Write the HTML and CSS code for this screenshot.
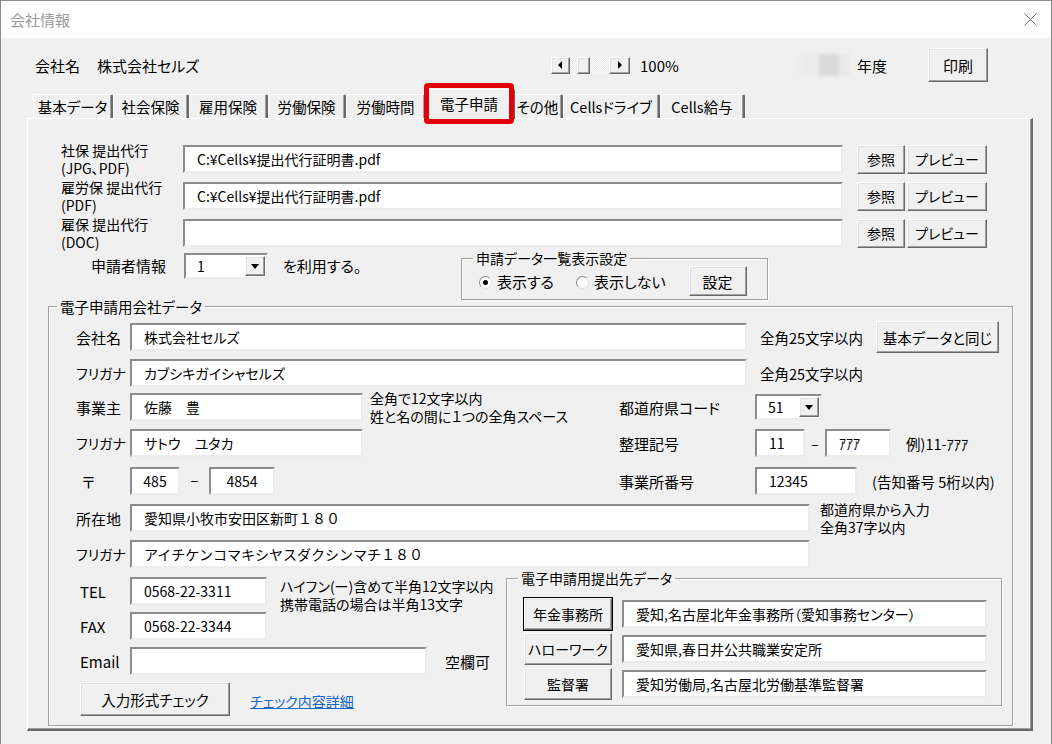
FILE: index.html
```html
<!DOCTYPE html>
<html lang="ja">
<head>
    <meta charset="UTF-8">
    <title>会社情報</title>
    <link rel="stylesheet" href="styles.css">
</head>
<body>
<div class="window">
    <div class="titlebar">
        <span class="title">会社情報</span>
        <svg class="close" width="13" height="13" viewBox="0 0 13 13"><path d="M0.5 0.5L12.5 12.5M12.5 0.5L0.5 12.5"/></svg>
    </div>

    <div class="topbar">
        <div class="company"><span>会社名</span><span>株式会社セルズ</span></div>
        <div class="zoomctl">
            <span class="btn sb-btn"><i class="tri-left"></i></span>
            <span class="sb-track"><span class="btn sb-thumb"></span></span>
            <span class="btn sb-btn sb-right"><i class="tri-right"></i></span>
            <span class="zoom-val">100%</span>
        </div>
        <div class="year"><span class="year-blur"></span><span>年度</span></div>
        <button class="btn btn-print">印刷</button>
    </div>

    <div class="tabs">
        <div class="tab" style="width:80px">基本データ</div>
        <div class="tab" style="width:76px">社会保険</div>
        <div class="tab" style="width:79px">雇用保険</div>
        <div class="tab" style="width:78px">労働保険</div>
        <div class="tab" style="width:80px">労働時間</div>
        <div class="tab active" style="width:91px">電子申請</div>
        <div class="tab" style="width:50px">その他</div>
        <div class="tab" style="width:97px">Cellsドライブ</div>
        <div class="tab" style="width:85px">Cells給与</div>
    </div>

    <div class="page">
        <div class="files">
            <div class="file-row">
                <div class="file-label">社保 提出代行<br>(JPG、PDF)</div>
                <input class="field file-field" type="text" value="C:¥Cells¥提出代行証明書.pdf">
                <button class="btn btn-ref">参照</button>
                <button class="btn btn-prev">プレビュー</button>
            </div>
            <div class="file-row">
                <div class="file-label">雇労保 提出代行<br>(PDF)</div>
                <input class="field file-field" type="text" value="C:¥Cells¥提出代行証明書.pdf">
                <button class="btn btn-ref">参照</button>
                <button class="btn btn-prev">プレビュー</button>
            </div>
            <div class="file-row">
                <div class="file-label">雇保 提出代行<br>(DOC)</div>
                <input class="field file-field" type="text" value="">
                <button class="btn btn-ref">参照</button>
                <button class="btn btn-prev">プレビュー</button>
            </div>
        </div>

        <div class="applicant">
            <div class="applicant-label">申請者情報</div>
            <div class="combo combo-applicant"><span class="combo-val">1</span><span class="btn combo-arrow"><i class="tri-down"></i></span></div>
            <div class="use-text">を利用する。</div>
            <fieldset class="group list-setting">
                <legend>申請データ一覧表示設定</legend>
                <div class="ls-body">
                    <span class="radio checked"></span><span class="radio-text">表示する</span>
                    <span class="radio second"></span><span class="radio-text">表示しない</span>
                    <button class="btn btn-set">設定</button>
                </div>
            </fieldset>
        </div>

        <fieldset class="group company-data">
            <legend>電子申請用会社データ</legend>
            <div class="cd-body">
                <div class="row">
                    <div class="row-label">会社名</div>
                    <input class="field w-617" type="text" value="株式会社セルズ">
                    <div class="note note-limit">全角25文字以内</div>
                    <button class="btn btn-same">基本データと同じ</button>
                </div>
                <div class="row">
                    <div class="row-label kana">フリガナ</div>
                    <input class="field w-617" type="text" value="カブシキガイシャセルズ">
                    <div class="note note-limit">全角25文字以内</div>
                </div>

                <div class="row row-owner">
                    <div class="row-left">
                        <div class="row-label">事業主</div>
                        <input class="field w-233" type="text" value="佐藤　豊">
                        <div class="note note-small">全角で12文字以内<br>姓と名の間に１つの全角スペース</div>
                    </div>
                    <div class="right-label">都道府県コード</div>
                    <div class="combo combo-pref"><span class="combo-val">51</span><span class="btn combo-arrow"><i class="tri-down"></i></span></div>
                </div>
                <div class="row">
                    <div class="row-left">
                        <div class="row-label kana">フリガナ</div>
                        <input class="field w-233" type="text" value="サトウ　ユタカ">
                    </div>
                    <div class="right-label">整理記号</div>
                    <input class="field w-50" type="text" value="11">
                    <div class="dash dash-code">–</div>
                    <input class="field w-66" type="text" value="ｱｱｱ">
                    <div class="note note-after">例)11-ｱｱｱ</div>
                </div>
                <div class="row row-zip">
                    <div class="row-left">
                        <div class="row-label label-zip">〒</div>
                        <input class="field w-50 centered" type="text" value="485">
                        <div class="dash dash-zip">−</div>
                        <input class="field w-66 centered" type="text" value="4854">
                    </div>
                    <div class="right-label">事業所番号</div>
                    <input class="field w-102" type="text" value="12345">
                    <div class="note note-after">(告知番号 5桁以内)</div>
                </div>

                <div class="row row-addr">
                    <div class="row-label">所在地</div>
                    <input class="field w-680 wide-digits" type="text" value="愛知県小牧市安田区新町１８０">
                    <div class="note note-small note-addr">都道府県から入力<br>全角37字以内</div>
                </div>
                <div class="row">
                    <div class="row-label kana">フリガナ</div>
                    <input class="field w-680 wide-digits" type="text" value="アイチケンコマキシヤスダクシンマチ１８０">
                </div>

                <div class="bottom">
                    <div class="contact">
                        <div class="crow">
                            <div class="row-label label-latin">TEL</div>
                            <input class="field w-137" type="text" value="0568-22-3311">
                            <div class="note note-small note-tel">ハイフン(ー)含めて半角12文字以内<br>携帯電話の場合は半角13文字</div>
                        </div>
                        <div class="crow">
                            <div class="row-label label-latin">FAX</div>
                            <input class="field w-137" type="text" value="0568-22-3344">
                        </div>
                        <div class="crow">
                            <div class="row-label label-latin">Email</div>
                            <input class="field w-297" type="text" value="">
                            <div class="note note-blank">空欄可</div>
                        </div>
                        <div class="crow check-row">
                            <button class="btn btn-check">入力形式チェック</button>
                            <a class="link" href="#">チェック内容詳細</a>
                        </div>
                    </div>

                    <fieldset class="group dest">
                        <legend>電子申請用提出先データ</legend>
                        <div class="dest-body">
                            <div class="drow">
                                <button class="btn btn-dest default">年金事務所</button>
                                <input class="field w-365" type="text" value="愛知,名古屋北年金事務所（愛知事務センター）">
                            </div>
                            <div class="drow">
                                <button class="btn btn-dest">ハローワーク</button>
                                <input class="field w-365" type="text" value="愛知県,春日井公共職業安定所">
                            </div>
                            <div class="drow">
                                <button class="btn btn-dest">監督署</button>
                                <input class="field w-365" type="text" value="愛知労働局,名古屋北労働基準監督署">
                            </div>
                        </div>
                    </fieldset>
                </div>
            </div>
        </fieldset>
    </div>
</div>
</body>
</html>
```

FILE: styles.css
```css
* {
    box-sizing: border-box;
}

body {
    margin: 0;
    background: #f0f0f0;
    font-family: "Noto Sans CJK JP", "Noto Sans", sans-serif;
    font-size: 14px;
    line-height: 17px;
    color: #000;
    font-feature-settings: "palt";
}

.window {
    width: 1052px;
    height: 744px;
    border: 1px solid #8a8a8a;
    border-bottom: none;
    background: #f0f0f0;
    overflow: hidden;
}

/* title bar */
.titlebar {
    height: 37px;
    background: #fff;
    display: flex;
    align-items: center;
    justify-content: space-between;
    padding: 0 14px 0 9px;
}

.title {
    color: #9a9a9a;
    font-size: 15px;
}

.close path {
    stroke: #777;
    stroke-width: 1;
    fill: none;
}

/* classic raised button */
.btn {
    font: inherit;
    color: #000;
    background: #f0f0f0;
    border: 1px solid;
    border-color: #fff #696969 #696969 #fff;
    box-shadow: inset -1px -1px 0 #a0a0a0, inset 1px 1px 0 #e3e3e3;
    padding: 0;
    border-radius: 0;
}

/* classic sunken text box */
.field {
    font: inherit;
    font-size: 14px;
    color: #000;
    height: 28px;
    background: #fff;
    border: 2px solid;
    border-color: #8c8c8c #ececec #ececec #8c8c8c;
    padding: 0 0 0 12px;
    outline: none;
    flex-shrink: 0;
}

.field.centered {
    padding: 0;
    text-align: center;
}

.field.wide-digits {
    font-feature-settings: normal;
}

/* header */
.topbar {
    display: flex;
    align-items: center;
    height: 34px;
    margin-top: 10px;
    padding-left: 34px;
    font-size: 15px;
}

.company {
    width: 516px;
    display: flex;
    gap: 17px;
}

.zoomctl {
    width: 249px;
    display: flex;
    align-items: center;
}

.sb-btn {
    width: 19px;
    height: 17px;
    display: flex;
    align-items: center;
    justify-content: center;
}

.sb-right {
    width: 21px;
}

.sb-track {
    width: 39px;
    height: 17px;
    background: repeating-conic-gradient(#fdfdfd 0 25%, #e9e9e9 0 50%) 0 0 / 2px 2px;
}

.sb-thumb {
    display: block;
    margin-left: 7px;
    width: 13px;
    height: 17px;
}

.tri-left, .tri-right, .tri-down {
    display: block;
    width: 0;
    height: 0;
    border: 4px solid transparent;
}

.tri-left {
    border-right-color: #000;
    border-left-width: 0;
    margin-left: -1px;
}

.tri-right {
    border-left-color: #000;
    border-right-width: 0;
}

.tri-down {
    border-top-color: #000;
    border-width: 5px 4px 0 4px;
}

.zoom-val {
    margin-left: 10px;
}

.year {
    width: 128px;
    display: flex;
    align-items: center;
}

.year-blur {
    width: 50px;
    height: 22px;
    margin-right: 7px;
    background: linear-gradient(90deg, #ebebeb 0 38%, #dadada 38% 78%, #e9e9e9 78%);
    filter: blur(1.5px);
}

.btn-print {
    width: 60px;
    height: 34px;
    font-size: 15px;
}

/* tab strip */
.tabs {
    display: flex;
    align-items: flex-end;
    height: 24px;
    margin-top: 12px;
    padding-left: 32px;
}

.tab {
    height: 24px;
    flex-shrink: 0;
    font-size: 14.5px;
    display: flex;
    align-items: center;
    justify-content: center;
    background: #f0f0f0;
    border-top: 1px solid #fff;
    border-left: 1px solid #fff;
    border-right: 2px solid #696969;
    border-radius: 2px 2px 0 0;
    box-shadow: inset -1px 0 0 #a0a0a0;
}

.tab.active {
    height: 30px;
    margin: 0 -2px -1px;
    position: relative;
    z-index: 1;
    padding-bottom: 3px;
}

.tab.active::after {
    content: "";
    position: absolute;
    left: -1px;
    right: -1px;
    top: -7px;
    bottom: -5px;
    border: 5px solid #e3000b;
    border-radius: 4px;
}

/* tab page */
.page {
    margin-left: 26px;
    width: 1006px;
    height: 613px;
    border-top: 1px solid #fff;
    border-left: 1px solid #fff;
    border-right: 2px solid #696969;
    border-bottom: 2px solid #696969;
    box-shadow: inset -1px -1px 0 #a0a0a0;
    padding-top: 22px;
}

.files {
    margin-left: 33px;
}

.file-row {
    display: flex;
    height: 37px;
}

.file-label {
    width: 122px;
    font-size: 14px;
    line-height: 18px;
}

.file-field {
    margin-top: 4px;
    width: 660px;
}

.file-row .btn {
    margin-top: 4px;
    height: 29px;
    font-size: 14px;
}

.btn-ref {
    margin-left: 14px;
    width: 48px;
}

.btn-prev {
    margin-left: 2px;
    width: 80px;
}

.applicant {
    display: flex;
    height: 48px;
    margin-left: 63px;
}

.applicant-label {
    width: 93px;
    font-size: 15px;
    line-height: 26px;
    margin-top: 1px;
}

.use-text {
    width: 178px;
    margin-left: 15px;
    margin-top: 1px;
    font-size: 15px;
    line-height: 26px;
}

/* drop-down box */
.combo {
    height: 26px;
    display: flex;
    align-items: center;
    background: #fff;
    border: 2px solid;
    border-color: #8c8c8c #ececec #ececec #8c8c8c;
    flex-shrink: 0;
}

.combo-applicant {
    width: 84px;
    margin-top: 1px;
}

.combo-pref {
    width: 67px;
}

.combo-val {
    flex: 1;
    padding-left: 11px;
}

.combo-arrow {
    width: 20px;
    height: 20px;
    margin-right: 1px;
    display: flex;
    align-items: center;
    justify-content: center;
}

/* group boxes */
.group {
    margin: 0;
    padding: 0;
    min-width: 0;
    border: 1px solid #a0a0a0;
    box-shadow: inset 1px 1px 0 #fff, 1px 1px 0 #fff;
}

.group legend {
    margin-left: 11px;
    padding: 0 3px;
    font-size: 14px;
    line-height: 17px;
}

.list-setting {
    margin-top: -2px;
    width: 307px;
    height: 50px;
}

.ls-body {
    display: flex;
    align-items: center;
    height: 30px;
    margin-top: -1px;
    padding-left: 17px;
    font-size: 15px;
}

.radio {
    width: 13px;
    height: 13px;
    border-radius: 50%;
    background: #fff;
    border: 1px solid;
    border-color: #8c8c8c #e3e3e3 #e3e3e3 #8c8c8c;
    position: relative;
    flex-shrink: 0;
    margin-top: 2px;
}

.radio.checked::after {
    content: "";
    position: absolute;
    left: 3px;
    top: 3px;
    width: 5px;
    height: 5px;
    border-radius: 50%;
    background: #000;
}

.radio.second {
    margin-left: 22px;
}

.radio-text {
    margin-left: 5px;
}

.btn-set {
    margin-left: 23px;
    width: 58px;
    height: 30px;
    font-size: 15px;
}

.company-data {
    margin: -2px 0 0 20px;
    width: 965px;
}

.company-data > legend {
    margin-left: 8px;
    font-size: 14.5px;
}

.cd-body {
    padding: 0 0 9px 27px;
}

.row {
    display: flex;
    align-items: center;
    height: 28px;
    margin-top: 8px;
}

.row-owner {
    margin-top: 6px;
}

.row-zip {
    margin-top: 10px;
}

.row-addr {
    margin-top: 9px;
}

.row-label {
    width: 54px;
    flex-shrink: 0;
    font-size: 15px;
}

.row-label.kana {
    font-size: 14px;
}

.label-zip {
    padding-left: 6px;
}

.label-latin {
    padding-left: 4px;
}

.row-left {
    width: 543px;
    display: flex;
    align-items: center;
    flex-shrink: 0;
}

.right-label {
    width: 136px;
    font-size: 15px;
}

.w-50 { width: 50px; }
.w-66 { width: 66px; }
.w-102 { width: 102px; }
.w-137 { width: 137px; }
.w-233 { width: 233px; }
.w-297 { width: 297px; }
.w-365 { width: 365px; }
.w-617 { width: 617px; }
.w-680 { width: 680px; }

.note {
    font-size: 14.5px;
    white-space: nowrap;
}

.note-small {
    font-size: 14px;
    line-height: 18px;
}

.note-limit {
    margin-left: 13px;
    width: 116px;
}

.note-after {
    margin-left: 15px;
}

.row-owner .note-small {
    margin-left: 7px;
}

.note-addr {
    margin-left: 10px;
}

.btn-same {
    width: 123px;
    height: 32px;
    font-size: 14.5px;
}

.dash {
    text-align: center;
    flex-shrink: 0;
}

.dash-code {
    width: 20px;
}

.dash-zip {
    width: 29px;
}

/* contact and destination block */
.bottom {
    display: flex;
    margin-top: 9px;
}

.contact {
    width: 430px;
    flex-shrink: 0;
}

.crow {
    display: flex;
    align-items: center;
    height: 28px;
    margin-top: 7px;
}

.crow:first-child {
    margin-top: 0;
}

.note-tel {
    margin-left: 13px;
    align-self: flex-start;
}

.note-blank {
    margin-left: 18px;
    font-size: 15px;
}

.check-row {
    height: 34px;
}

.btn-check {
    margin-left: 4px;
    width: 150px;
    height: 34px;
    font-size: 14.5px;
}

.link {
    margin-left: 20px;
    margin-top: 5px;
    color: #1267c8;
    text-decoration: underline;
    font-size: 14px;
}

.dest {
    margin-top: -7px;
    width: 496px;
    align-self: flex-start;
}

.dest-body {
    padding: 11px 0 5px 17px;
}

.drow {
    display: flex;
    align-items: center;
    height: 32px;
    margin-top: 3px;
}

.drow:first-child {
    margin-top: 0;
}

.btn-dest {
    width: 88px;
    height: 32px;
    font-size: 14px;
}

.btn-dest.default {
    outline: 1px solid #000;
}

.drow .field {
    margin-left: 10px;
}
```
